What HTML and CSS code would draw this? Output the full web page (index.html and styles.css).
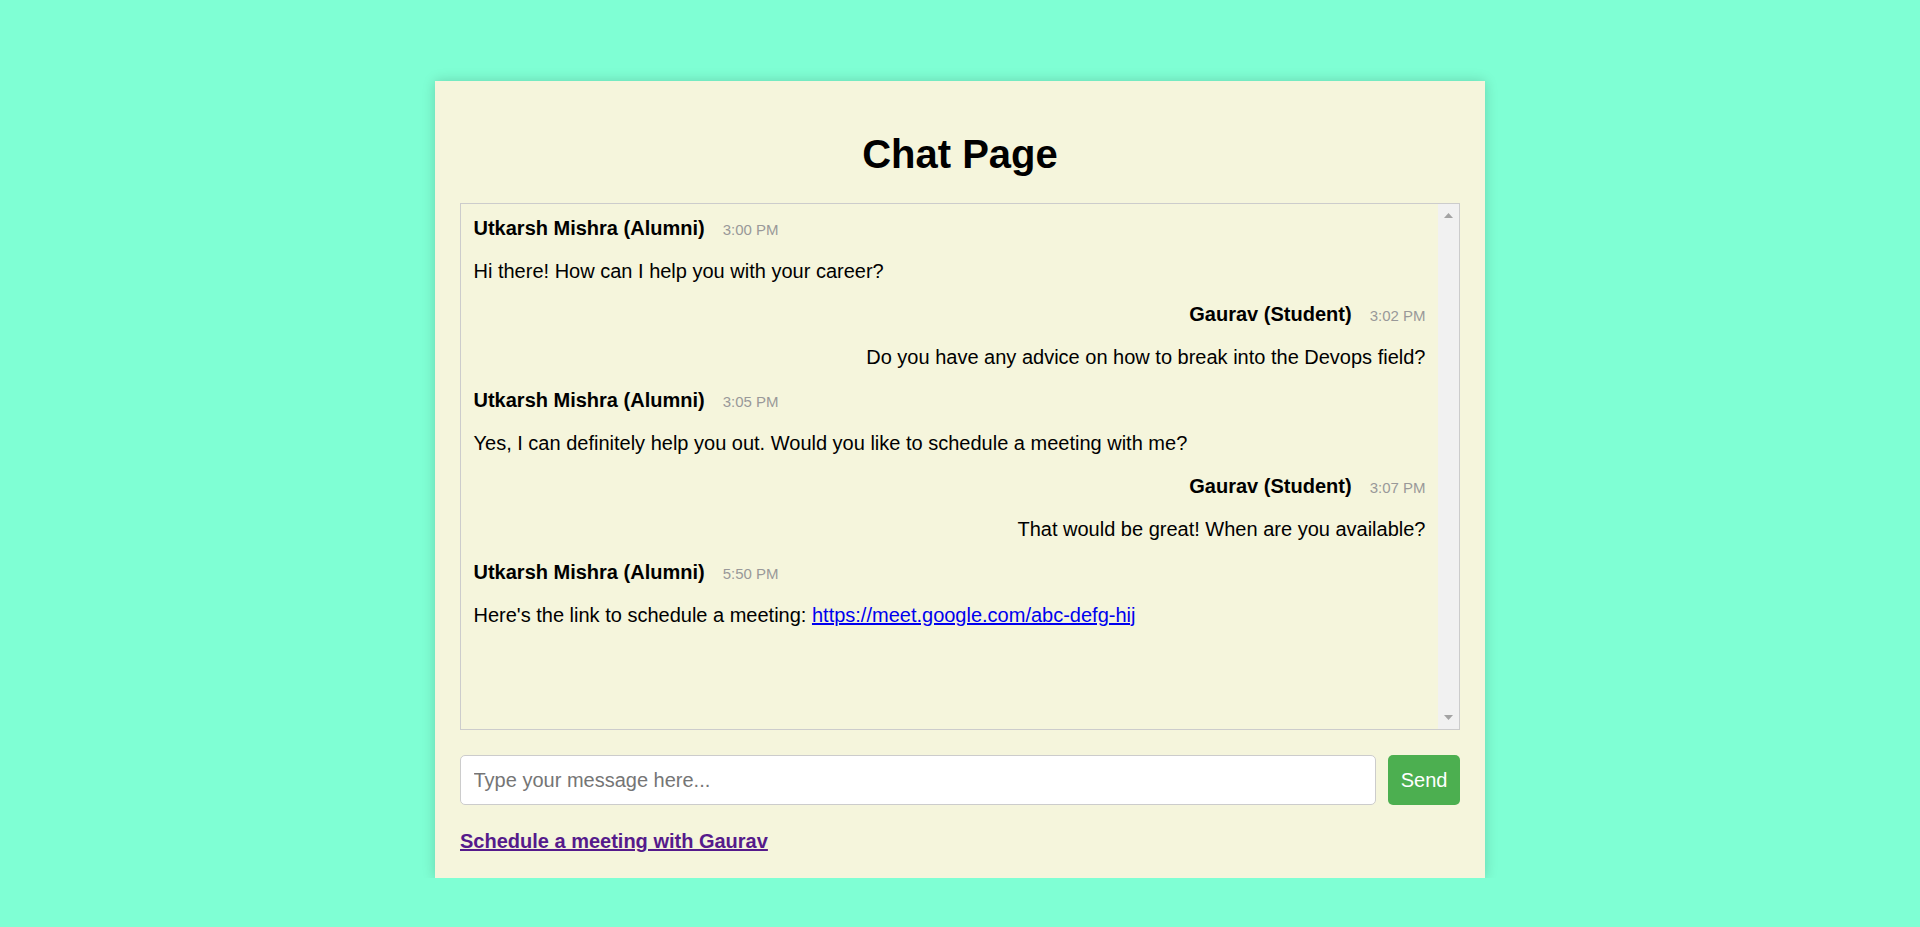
FILE: index.html
```html
<!DOCTYPE html>
<html lang="en">
<head>
<meta charset="utf-8">
<title>Chat Page</title>
<link rel="stylesheet" href="styles.css">
</head>
<body>
<main class="container">
  <h1 class="title">Chat Page</h1>
  <div class="chat-box">
    <div class="messages">
      <div class="message">
        <div class="meta"><strong class="sender">Utkarsh Mishra (Alumni)</strong> <span class="time">3:00 PM</span></div>
        <p class="text">Hi there! How can I help you with your career?</p>
      </div>
      <div class="message mine">
        <div class="meta"><strong class="sender">Gaurav (Student)</strong> <span class="time">3:02 PM</span></div>
        <p class="text">Do you have any advice on how to break into the Devops field?</p>
      </div>
      <div class="message">
        <div class="meta"><strong class="sender">Utkarsh Mishra (Alumni)</strong> <span class="time">3:05 PM</span></div>
        <p class="text">Yes, I can definitely help you out. Would you like to schedule a meeting with me?</p>
      </div>
      <div class="message mine">
        <div class="meta"><strong class="sender">Gaurav (Student)</strong> <span class="time">3:07 PM</span></div>
        <p class="text">That would be great! When are you available?</p>
      </div>
      <div class="message">
        <div class="meta"><strong class="sender">Utkarsh Mishra (Alumni)</strong> <span class="time">5:50 PM</span></div>
        <p class="text">Here's the link to schedule a meeting: <a class="meet-link" href="#meet">https://meet.google.com/abc-defg-hij</a></p>
      </div>
    </div>
    <div class="scrollbar" aria-hidden="true">
      <svg class="arrow" width="21" height="21" viewBox="0 0 21 21"><polygon points="6,14 10.5,9 15,14" fill="#a3a3a3"/></svg>
      <svg class="arrow" width="21" height="21" viewBox="0 0 21 21"><polygon points="6,7 15,7 10.5,12" fill="#a3a3a3"/></svg>
    </div>
  </div>
  <form class="input-row" onsubmit="return false;">
    <input class="msg-input" type="text" placeholder="Type your message here...">
    <button class="send-btn" type="button">Send</button>
  </form>
  <div class="schedule">
    <a class="schedule-link" href="#schedule">Schedule a meeting with Gaurav</a>
  </div>
</main>
</body>
</html>
```

FILE: styles.css
```css
html, body {
  margin: 0;
  padding: 0;
}

body {
  background: #7fffd4;
  font-family: "Liberation Sans", Arial, sans-serif;
  font-size: 20px;
  color: #000;
  padding-top: 81px;
}

.container {
  width: 1000px;
  margin: 0 auto;
  padding: 25px;
  background: #f5f5dc;
  box-shadow: 0 0 12px rgba(0, 0, 0, 0.18);
}

.title {
  font-size: 40px;
  font-weight: bold;
  text-align: center;
  margin: 25px 0 26px;
  line-height: 46px;
}

.chat-box {
  display: flex;
  border: 1px solid #cccccc;
  background: #f5f5dc;
}

.messages {
  flex: 1;
  height: 500px;
  padding: 12.5px;
  overflow-y: auto;
  scrollbar-width: none;
}

.scrollbar {
  width: 21px;
  background: #f1f1f1;
  display: flex;
  flex-direction: column;
  justify-content: space-between;
}

.arrow {
  display: block;
}

.message {
  margin-bottom: 20px;
}

.message.mine {
  text-align: right;
}

.sender {
  font-weight: bold;
}

.time {
  font-size: 15px;
  color: #999999;
  margin-left: 12.5px;
}

.text {
  margin: 20px 0 0;
}

.meet-link {
  color: #0000ee;
  text-decoration: underline;
}

.input-row {
  display: flex;
  gap: 12.5px;
  margin: 25px 0 0;
}

.msg-input {
  flex: 1;
  font-family: "Liberation Sans", Arial, sans-serif;
  font-size: 20px;
  line-height: 23px;
  padding: 12.5px;
  border: 1px solid #cccccc;
  border-radius: 5px;
  background: #ffffff;
  color: #000;
  outline: none;
}

.msg-input::placeholder {
  color: #757575;
}

.send-btn {
  font-family: "Liberation Sans", Arial, sans-serif;
  font-size: 20px;
  line-height: 23px;
  padding: 12.5px;
  border: none;
  border-radius: 5px;
  background: #4caf50;
  color: #ffffff;
  cursor: pointer;
}

.schedule {
  margin-top: 25px;
}

.schedule-link {
  color: #551a8b;
  font-weight: bold;
  text-decoration: underline;
}
```
